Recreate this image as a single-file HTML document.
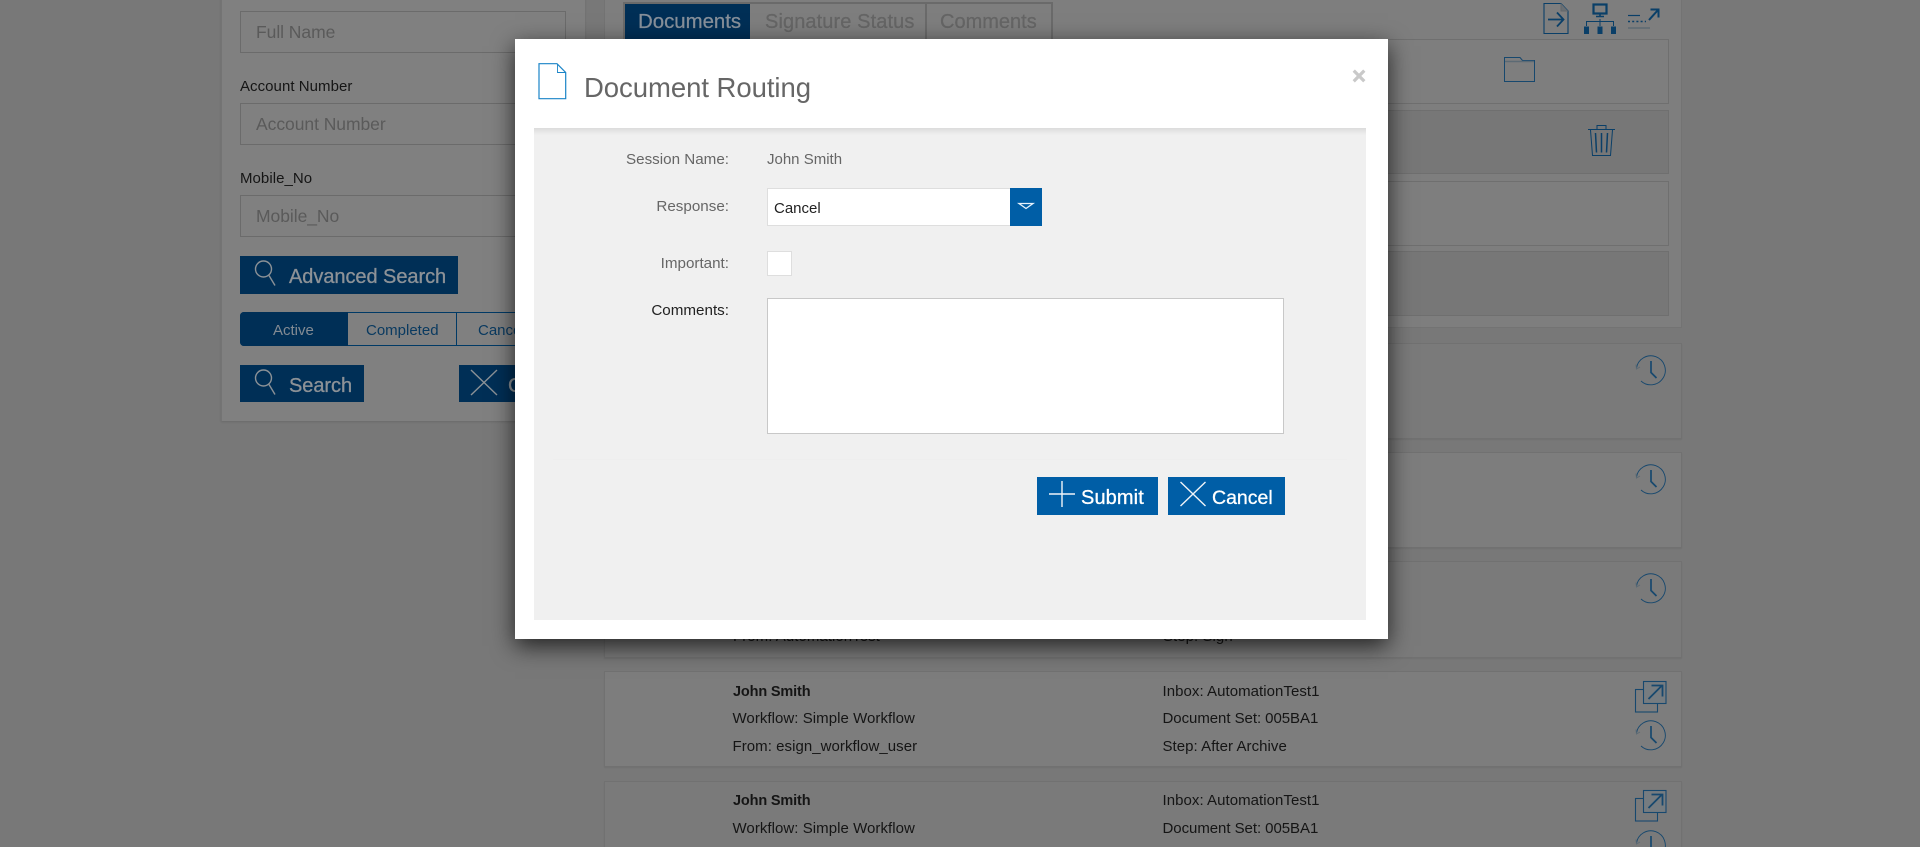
<!DOCTYPE html>
<html lang="en">
<head>
<meta charset="utf-8">
<title>Document Routing</title>
<style>
html,body{margin:0;padding:0;width:1920px;height:847px;overflow:hidden;background:#787878;font-family:"Liberation Sans",Arial,sans-serif}
#root{position:relative;width:1920px;height:847px;overflow:hidden;background:#787878}
.a{position:absolute;box-sizing:border-box}
.t{position:absolute;white-space:nowrap;line-height:20px;height:20px}
svg{position:absolute;overflow:visible;left:0;top:0}
.inp{position:absolute;left:240px;width:326px;height:42px;border:1px solid #6b6b6b;box-sizing:border-box}
.ph{font-size:17.5px;color:#5a5a5a;letter-spacing:-.05px}
.lb{font-size:15px;color:#151515;letter-spacing:.05px}
.nav{position:absolute;background:#002f56}
.bt{font-size:20px;font-weight:400;color:#8d9297;letter-spacing:-.05px;-webkit-text-stroke:.3px #8d9297}
.card{position:absolute;left:604px;width:1078px;background:#7d7d7d;border:1px solid #717171;box-sizing:border-box;box-shadow:0 1px 1px rgba(0,0,0,.06)}
.c{font-size:15px;color:#151515;letter-spacing:.05px}
.b{font-weight:700;font-size:14.5px;letter-spacing:-.15px}
.box{position:absolute;left:620px;width:1049px;border:1px solid #6f6f6f;box-sizing:border-box}
.m{font-size:15.2px;color:#666}
.r{left:529px;width:200px;text-align:right}
.tb{font-size:20px;color:#656565;-webkit-text-stroke:.25px #656565}
</style>
</head>
<body>
<div id="root">

<!-- left panel -->
<div class="a" style="left:221px;top:-5px;width:364px;height:426px;background:#808080;border-left:1px solid #747474;box-shadow:0 1px 2px rgba(0,0,0,.12)"></div>
<div class="inp" style="top:11px"></div>
<div class="t ph" style="left:256px;top:22px">Full Name</div>
<div class="t lb" style="left:240px;top:77px">Account Number</div>
<div class="inp" style="top:103px"></div>
<div class="t ph" style="left:256px;top:114px">Account Number</div>
<div class="t lb" style="left:240px;top:169px">Mobile_No</div>
<div class="inp" style="top:195px"></div>
<div class="t ph" style="left:256px;top:206px">Mobile_No</div>

<div class="nav" style="left:240px;top:256px;width:218px;height:38px"></div>
<div class="t bt" style="left:289px;top:267px">Advanced Search</div>

<div class="a" style="left:240px;top:312px;width:300px;height:34px;border:1px solid #003a66;border-radius:4px 0 0 4px"></div>
<div class="nav" style="left:240px;top:312px;width:108px;height:34px;border-radius:4px 0 0 4px"></div>
<div class="a" style="left:456px;top:312px;width:1px;height:34px;background:#003a66"></div>
<div class="t" style="left:273px;top:321px;font-size:15px;color:#838b93">Active</div>
<div class="t" style="left:366px;top:321px;font-size:15px;color:#0a3a60">Completed</div>
<div class="t" style="left:478px;top:321px;font-size:15px;color:#0a3a60">Cancelled</div>

<div class="nav" style="left:240px;top:365px;width:124px;height:37px"></div>
<div class="t bt" style="left:289px;top:376px">Search</div>
<div class="nav" style="left:459px;top:365px;width:124px;height:37px"></div>
<div class="t bt" style="left:508px;top:376px">Clear</div>

<!-- right panel -->
<div class="a" style="left:604px;top:-5px;width:1078px;height:333px;background:#7e7e7e;border:1px solid #737373"></div>
<div class="a" style="left:623px;top:2px;width:430px;height:38px;border:2px solid #6a6a6a;border-bottom:0"></div>
<div class="nav" style="left:625px;top:4px;width:125px;height:36px"></div>
<div class="a" style="left:925px;top:3px;width:2px;height:37px;background:#6a6a6a"></div>
<div class="t" style="left:638px;top:12px;font-size:20.4px;color:#87909a;-webkit-text-stroke:.25px #87909a">Documents</div>
<div class="t tb" style="left:765px;top:12px;letter-spacing:.1px">Signature Status</div>
<div class="t tb" style="left:940px;top:12px">Comments</div>

<div class="box" style="top:39px;height:65px"></div>
<div class="box" style="top:110px;height:64px;background:#777"></div>
<div class="box" style="top:181px;height:65px"></div>
<div class="box" style="top:251px;height:65px;background:#777"></div>

<!-- cards -->
<div class="card" style="top:343px;height:96px;background:#7a7a7a"></div>
<div class="card" style="top:452px;height:96px"></div>
<div class="card" style="top:561px;height:97px;background:#7a7a7a"></div>
<div class="t c" style="left:733px;top:627px">From: AutomationTest</div>
<div class="t c" style="left:1163px;top:627px">Step: Sign</div>

<div class="card" style="top:671px;height:96px"></div>
<div class="t c b" style="left:733px;top:682px">John Smith</div>
<div class="t c" style="left:732.5px;top:709px">Workflow: Simple Workflow</div>
<div class="t c" style="left:732.5px;top:737px">From: esign_workflow_user</div>
<div class="t c" style="left:1162.5px;top:682px">Inbox: AutomationTest1</div>
<div class="t c" style="left:1162.5px;top:709px;letter-spacing:-.05px">Document Set: 005BA1</div>
<div class="t c" style="left:1162.5px;top:737px">Step: After Archive</div>

<div class="card" style="top:781px;height:96px;background:#7a7a7a"></div>
<div class="t c b" style="left:733px;top:791px">John Smith</div>
<div class="t c" style="left:732.5px;top:819px">Workflow: Simple Workflow</div>
<div class="t c" style="left:1162.5px;top:791px">Inbox: AutomationTest1</div>
<div class="t c" style="left:1162.5px;top:819px;letter-spacing:-.05px">Document Set: 005BA1</div>

<!-- background icons -->
<svg width="1920" height="847" viewBox="0 0 1920 847" fill="none">
  <!-- search + x -->
  <g stroke="#8b9196" stroke-width="1.4">
    <circle cx="263.5" cy="269" r="8"/><path d="M269 275.5L275 285.5"/>
    <circle cx="263.5" cy="378" r="8"/><path d="M269 384.5L275 394.5"/>
    <path d="M471 370L497 395M497 370L471 395"/>
  </g>
  <!-- top icons -->
  <g stroke="#0a3f68" fill="none">
    <path d="M1544 3.5H1561L1568 11V33.5H1544Z" stroke-width="1.1"/>
    <path d="M1561 3.5V11H1568" fill="#6a6f73" stroke="#62676b"/>
    <path d="M1548 19.5H1563M1557 12.5L1563.5 19.5L1557 26.5" stroke-width="1.8"/>
    <rect x="1593.5" y="4.5" width="13" height="9" stroke-width="2.2"/>
    <path d="M1600 14V16M1596 16.5H1604" stroke-width="1.6"/>
    <path d="M1586.5 26V21.5H1613.5V26M1600 19V26" stroke-width="1"/>
    <rect x="1584.5" y="27" width="4" height="6.5" fill="#0a3f68" stroke-width="1"/>
    <rect x="1598" y="27" width="4" height="6.5" fill="#0a3f68" stroke-width="1"/>
    <rect x="1611.5" y="27" width="4" height="6.5" fill="#0a3f68" stroke-width="1"/>
    <path d="M1628 15.5H1640" stroke-width="1.2"/>
    <path d="M1628 21.5H1646" stroke-width="1.4" stroke-dasharray="2 2.2"/>
    <path d="M1649 20L1658 10M1650.5 9.5H1658.5V17.5" stroke-width="2"/>
    <path d="M1628 28H1650" stroke="#5f6a72" stroke-width="1.6"/>
    <!-- folder -->
    <path d="M1504.5 81.5V57.5H1520L1522.5 60.5H1534.5V81.5Z" stroke="#17486e" stroke-width="1"/>
    <path d="M1505 61.5H1534" stroke="#5c6a74" stroke-width="1.6"/>
    <!-- trash -->
    <path d="M1588 129.5H1615" stroke-width="1"/>
    <path d="M1597 129V125.5H1606V129" stroke-width="1"/>
    <path d="M1590.5 130L1592.5 155.5H1610.5L1612.5 130" stroke-width="1"/>
    <path d="M1595.5 133L1596.5 152.5M1601.5 133V152.5M1607.5 133L1606.5 152.5" stroke-width="1.5"/>
  </g>
  <!-- clocks -->
  <g stroke="#17486e" fill="none">
    <path d="M1636.5 368A14.5 14.5 0 1 1 1641 381" stroke-width=".9"/>
    <path d="M1636 364.5L1636.5 369L1640 367" stroke-width="1" stroke="#5c6a74"/>
    <path d="M1651 361V372.5L1656.5 378" stroke-width="1.7"/>
    <path d="M1636.5 477A14.5 14.5 0 1 1 1641 490" stroke-width=".9"/>
    <path d="M1636 473.5L1636.5 478L1640 476" stroke-width="1" stroke="#5c6a74"/>
    <path d="M1651 470V481.5L1656.5 487" stroke-width="1.7"/>
    <path d="M1636.5 586A14.5 14.5 0 1 1 1641 599" stroke-width=".9"/>
    <path d="M1636 582.5L1636.5 587L1640 585" stroke-width="1" stroke="#5c6a74"/>
    <path d="M1651 579V590.5L1656.5 596" stroke-width="1.7"/>
    <path d="M1636.5 733A14.5 14.5 0 1 1 1641 746" stroke-width=".9"/>
    <path d="M1636 729.5L1636.5 734L1640 732" stroke-width="1" stroke="#5c6a74"/>
    <path d="M1651 726V737.5L1656.5 743" stroke-width="1.7"/>
    <path d="M1636.5 843A14.5 14.5 0 1 1 1641 856" stroke-width=".9"/>
    <path d="M1636 839.5L1636.5 844L1640 842" stroke-width="1" stroke="#5c6a74"/>
    <path d="M1651 836V847.5" stroke-width="1.7"/>
    <!-- external -->
    <rect x="1635.5" y="689.5" width="22" height="22.5" stroke-width="1.1"/>
    <rect x="1643.5" y="681.5" width="22.5" height="22" fill="#767c80" stroke-width="1.1"/>
    <path d="M1648.5 699L1662 685.5M1651.5 685.5H1662.5V696.5" stroke-width="1.8"/>
    <rect x="1635.5" y="798.5" width="22" height="22.5" stroke-width="1.1"/>
    <rect x="1643.5" y="790.5" width="22.5" height="22" fill="#767c80" stroke-width="1.1"/>
    <path d="M1648.5 808L1662 794.5M1651.5 794.5H1662.5V805.5" stroke-width="1.8"/>
  </g>
</svg>

<!-- modal -->
<div class="a" style="left:515px;top:39px;width:873px;height:600px;background:#fff;box-shadow:0 7px 22px rgba(0,0,0,.72)"></div>
<div class="a" style="left:534px;top:128px;width:832px;height:492px;background:#f0f0f0"></div>
<div class="a" style="left:534px;top:128px;width:832px;height:7px;background:linear-gradient(#dcdcdc,#f0f0f0)"></div>
<div class="a" style="left:553px;top:459px;width:794px;height:1px;background:#eeeeee"></div>

<div class="t" style="left:584px;top:73px;height:30px;line-height:30px;font-size:27.5px;color:#666;letter-spacing:-.05px">Document Routing</div>
<div class="t" style="left:1352px;top:65px;height:24px;line-height:24px;font-size:24px;font-weight:700;color:#c9c9c9;-webkit-text-stroke:.6px #c9c9c9">×</div>

<div class="t m r" style="top:150px">Session Name:</div>
<div class="t m" style="left:767px;top:150px;font-size:15px">John Smith</div>
<div class="t m r" style="top:197px">Response:</div>
<div class="a" style="left:767px;top:188px;width:245px;height:38px;background:#fff;border:1px solid #dedede"></div>
<div class="t" style="left:774px;top:199px;font-size:15px;color:#222">Cancel</div>
<div class="a" style="left:1010px;top:188px;width:32px;height:38px;background:#005ea6"></div>
<div class="t m r" style="top:254px">Important:</div>
<div class="a" style="left:767px;top:251px;width:25px;height:25px;background:#fff;border:1px solid #dedede"></div>
<div class="t m r" style="top:301px;color:#222">Comments:</div>
<div class="a" style="left:767px;top:298px;width:517px;height:136px;background:#fff;border:1px solid #c8c8c8"></div>

<div class="a" style="left:1037px;top:477px;width:121px;height:38px;background:#005ea6"></div>
<div class="a" style="left:1168px;top:477px;width:117px;height:38px;background:#005ea6"></div>
<div class="t" style="left:1081px;top:488px;font-size:20px;letter-spacing:.1px;color:#fff;-webkit-text-stroke:.3px #fff">Submit</div>
<div class="t" style="left:1212px;top:488px;font-size:19.5px;color:#fff;-webkit-text-stroke:.3px #fff">Cancel</div>

<svg width="1920" height="847" viewBox="0 0 1920 847" fill="none">
  <path d="M539 63.7H557L565.7 72.5V98.7H539Z" stroke="#1a84c7" stroke-width="1.2" fill="#fff"/>
  <path d="M557.5 64V72.5H565.5" stroke="#1a84c7" stroke-width=".9"/>
  <path d="M1019 203.5H1033L1026 208.5Z" stroke="#e6f2fb" stroke-width="1.3"/>
  <path d="M1049 494H1075M1062 481V507" stroke="#f0f4f8" stroke-width="1.4"/>
  <path d="M1180.5 482L1205.5 506M1205.5 482L1180.5 506" stroke="#f0f4f8" stroke-width="1.4"/>
</svg>

</div>
</body>
</html>
